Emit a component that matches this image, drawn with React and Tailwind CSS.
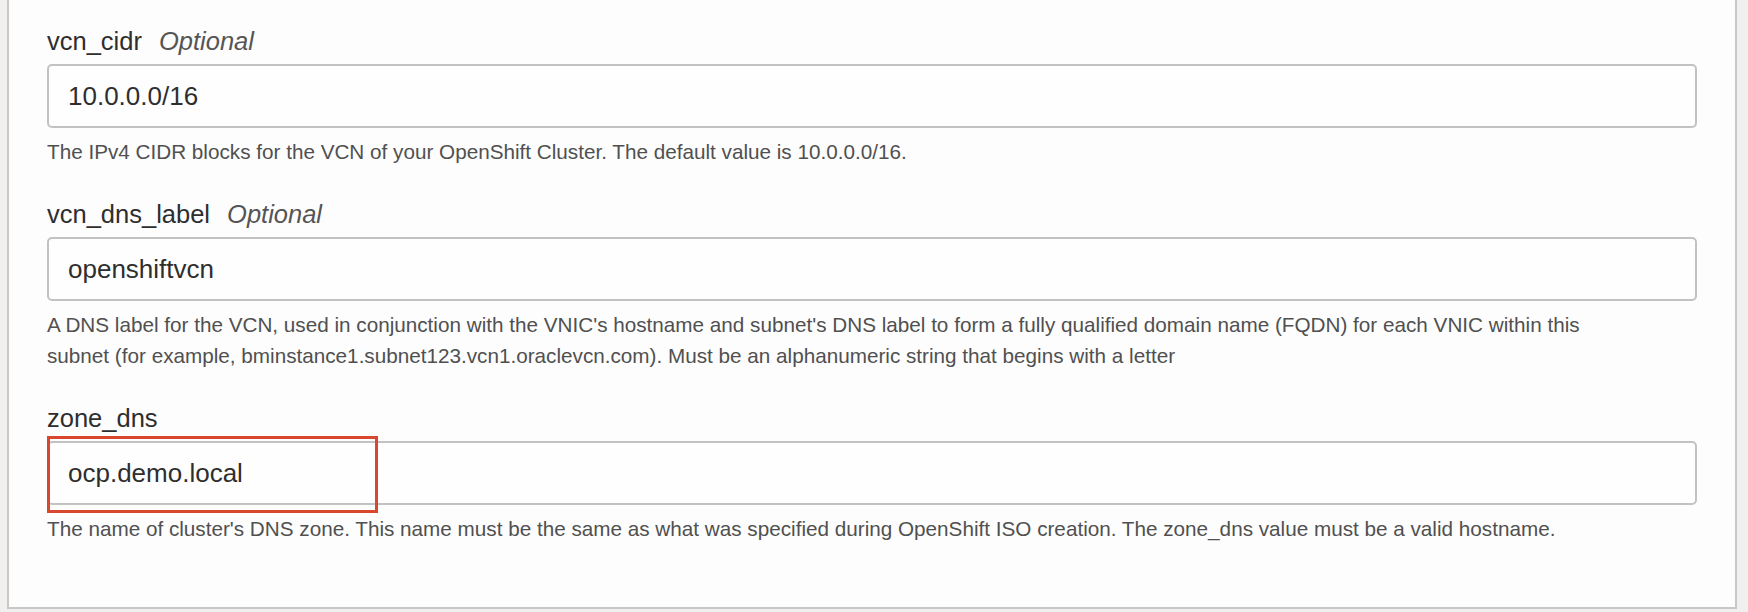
import React from "react";

const fields = [
  {
    name: "vcn_cidr",
    optional: true,
    value: "10.0.0.0/16",
    help: ["The IPv4 CIDR blocks for the VCN of your OpenShift Cluster. The default value is 10.0.0.0/16."],
  },
  {
    name: "vcn_dns_label",
    optional: true,
    value: "openshiftvcn",
    help: [
      "A DNS label for the VCN, used in conjunction with the VNIC's hostname and subnet's DNS label to form a fully qualified domain name (FQDN) for each VNIC within this",
      "subnet (for example, bminstance1.subnet123.vcn1.oraclevcn.com). Must be an alphanumeric string that begins with a letter",
    ],
  },
  {
    name: "zone_dns",
    optional: false,
    value: "ocp.demo.local",
    highlight: true,
    help: [
      "The name of cluster's DNS zone. This name must be the same as what was specified during OpenShift ISO creation. The zone_dns value must be a valid hostname.",
    ],
  },
];

const Field = ({ field }) => (
  <div className="flex flex-col">
    <label className="text-[25.5px] leading-[30px] text-[#2e2e2e] mb-2">
      {field.name}
      {field.optional && <span className="italic text-[#555] ml-[17px]">Optional</span>}
    </label>
    <div className="relative">
      <input
        readOnly
        value={field.value}
        className="w-full h-[64px] bg-[#fefefe] border-2 border-[#c2c2c2] rounded-[5px] pl-[19px] text-[26px] text-[#2e2e2e] outline-none"
        style={{ fontFamily: "inherit" }}
      />
      {/* red callout box from the tutorial screenshot */}
      {field.highlight && (
        <div className="absolute left-0 top-[-5px] w-[331px] h-[77px] border-[3px] border-[#d9472f] pointer-events-none" />
      )}
    </div>
    <p className="mt-2 text-[20.7px] leading-[31px] text-[#505050]">
      {field.help.map((line, i) => (
        <React.Fragment key={i}>
          {i > 0 && <br />}
          {line}
        </React.Fragment>
      ))}
    </p>
  </div>
);

export default function App() {
  return (
    <div
      className="w-[1748px] h-[612px] bg-[#f1f0ef] overflow-hidden"
      style={{ fontFamily: '"Liberation Sans", Arial, sans-serif' }}
    >
      <div className="ml-[7px] w-[1730px] h-[609px] bg-[#fdfdfd] border-l-2 border-r-2 border-b-2 border-[#c8c8c8] pt-[26px] pl-[38px] pr-[38px] flex flex-col gap-8">
        {fields.map((f) => (
          <Field key={f.name} field={f} />
        ))}
      </div>
    </div>
  );
}
